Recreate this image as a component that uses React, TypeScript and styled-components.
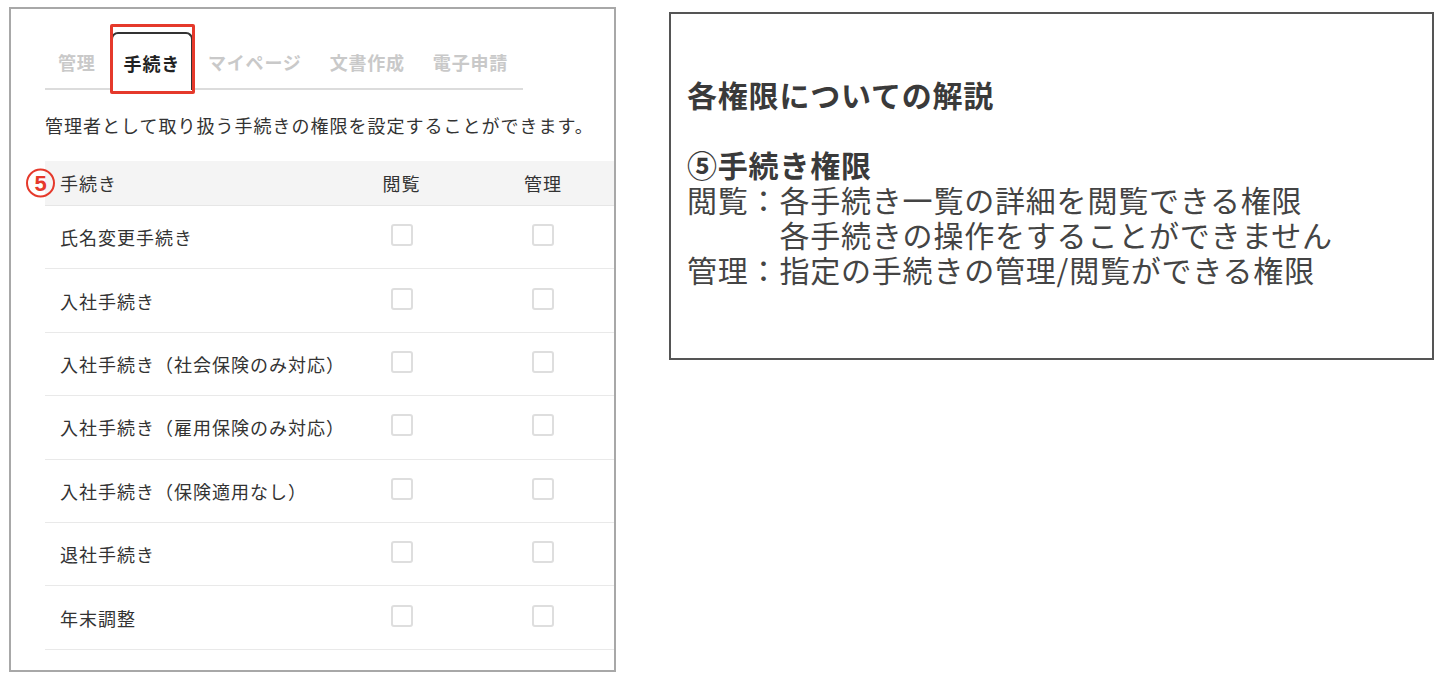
import styled, { createGlobalStyle } from "styled-components";
import { FC } from "react";

interface Procedure {
  id: number;
  name: string;
}

const tabs: Array<string> = ["管理", "手続き", "マイページ", "文書作成", "電子申請"];

const procedures: Array<Procedure> = [
  { id: 1, name: "氏名変更手続き" },
  { id: 2, name: "入社手続き" },
  { id: 3, name: "入社手続き（社会保険のみ対応）" },
  { id: 4, name: "入社手続き（雇用保険のみ対応）" },
  { id: 5, name: "入社手続き（保険適用なし）" },
  { id: 6, name: "退社手続き" },
  { id: 7, name: "年末調整" },
];

const GlobalStyle = createGlobalStyle`
  html, body {
    margin: 0;
    padding: 0;
    background: #fff;
  }

  body {
    font-family: "Noto Sans CJK JP", "Noto Sans", sans-serif;
    color: #333;
  }
`;

const App: FC = () => {
  return (
    <>
      <GlobalStyle />
      <Page>
        <SettingsPanel>
          <TabBar>
            {tabs.map((tab) => (
              <Tab key={tab} $isActive={tab === "手続き"}>
                {tab}
                {tab === "手続き" && <Highlight />}
              </Tab>
            ))}
          </TabBar>
          <Description>
            管理者として取り扱う手続きの権限を設定することができます。
          </Description>
          <Table>
            <HeaderRow>
              <Marker>5</Marker>
              <NameCell>手続き</NameCell>
              <CheckCell>閲覧</CheckCell>
              <CheckCell>管理</CheckCell>
            </HeaderRow>
            {procedures.map((item) => (
              <Row key={item.id}>
                <NameCell>{item.name}</NameCell>
                <CheckCell>
                  <CheckBox />
                </CheckCell>
                <CheckCell>
                  <CheckBox />
                </CheckCell>
              </Row>
            ))}
          </Table>
        </SettingsPanel>

        <NotePanel>
          <NoteTitle>各権限についての解説</NoteTitle>
          <NoteSubtitle>⑤手続き権限</NoteSubtitle>
          <NoteList>
            <NoteLabel>閲覧：</NoteLabel>
            <NoteText>
              各手続き一覧の詳細を閲覧できる権限
              <br />
              各手続きの操作をすることができません
            </NoteText>
            <NoteLabel>管理：</NoteLabel>
            <NoteText>指定の手続きの管理/閲覧ができる権限</NoteText>
          </NoteList>
        </NotePanel>
      </Page>
    </>
  );
};

export default App;

const Page = styled.div`
  display: flex;
  align-items: flex-start;
  padding: 7px 0 0 9px;
  width: 1452px;
  height: 682px;
  box-sizing: border-box;
`;

const SettingsPanel = styled.div`
  width: 607px;
  height: 665px;
  box-sizing: border-box;
  border: 2px solid #a8a8a8;
  padding: 23px 0 0 34px;
  overflow: hidden;
  font-size: 18px;
  letter-spacing: 1px;
`;

const TabBar = styled.div`
  display: flex;
  align-items: flex-end;
  gap: 2px;
  width: 478px;
  height: 56px;
  border-bottom: 2px solid #dcdcdc;
`;

const Tab = styled.div<{ $isActive?: boolean }>`
  position: relative;
  z-index: ${({ $isActive }) => ($isActive ? 1 : 0)};
  display: flex;
  align-items: center;
  box-sizing: border-box;
  height: ${({ $isActive }) => ($isActive ? "58px" : "56px")};
  margin-bottom: ${({ $isActive }) => ($isActive ? "-2px" : "0")};
  padding: ${({ $isActive }) => ($isActive ? "2px 11px 0" : "4px 13px 0")};
  background: ${({ $isActive }) => ($isActive ? "#fff" : "transparent")};
  border: ${({ $isActive }) => ($isActive ? "2px solid #333" : "none")};
  border-bottom: none;
  border-radius: 7px 7px 0 0;
  font-weight: 700;
  letter-spacing: 0.8px;
  color: ${({ $isActive }) => ($isActive ? "#222" : "#c9c9c9")};
  white-space: nowrap;
`;

const Highlight = styled.span`
  position: absolute;
  top: -10px;
  left: -3px;
  right: -4px;
  bottom: -4px;
  border: 3px solid #e5392b;
  border-radius: 2px;
  pointer-events: none;
`;

const Description = styled.p`
  margin: 22px 0 0;
  line-height: 26px;
  color: #333;
  white-space: nowrap;
`;

const Table = styled.div`
  margin-top: 23px;
  width: 569px;
`;

const HeaderRow = styled.div`
  position: relative;
  display: grid;
  grid-template-columns: 286px 141px 142px;
  align-items: center;
  height: 44px;
  background: #f4f4f4;
  border-bottom: 1px solid #e6e6e6;
`;

const Row = styled.div`
  display: grid;
  grid-template-columns: 286px 141px 142px;
  align-items: center;
  box-sizing: border-box;
  height: 63.4px;
  border-bottom: 1px solid #e9e9e9;
`;

const NameCell = styled.div`
  padding-left: 15px;
  color: #333;
  white-space: nowrap;
`;

const CheckCell = styled.div`
  display: flex;
  justify-content: center;
  color: #333;
`;

const CheckBox = styled.span`
  display: block;
  width: 22px;
  height: 22px;
  box-sizing: border-box;
  border: 2px solid #dedede;
  border-radius: 3px;
  margin-top: -4px;
`;

const Marker = styled.span`
  position: absolute;
  left: -19px;
  top: 50%;
  transform: translateY(-50%);
  display: flex;
  align-items: center;
  justify-content: center;
  width: 29px;
  height: 29px;
  box-sizing: border-box;
  border: 2.5px solid #e5392b;
  border-radius: 50%;
  font-family: "Liberation Sans", sans-serif;
  font-size: 22px;
  font-weight: 700;
  letter-spacing: 0;
  color: #e5392b;
`;

const NotePanel = styled.div`
  margin: 5px 0 0 53px;
  width: 765px;
  height: 348px;
  box-sizing: border-box;
  border: 2px solid #555;
  padding: 63px 16px 0;
  font-size: 30px;
  line-height: 35px;
  letter-spacing: 0.8px;
  color: #444;
`;

const NoteTitle = styled.div`
  margin-bottom: 35px;
  font-weight: 700;
  color: #3a3a3a;
`;

const NoteSubtitle = styled.div`
  font-weight: 700;
  color: #3a3a3a;
`;

const NoteList = styled.div`
  display: grid;
  grid-template-columns: auto 1fr;
`;

const NoteLabel = styled.span`
  white-space: nowrap;
`;

const NoteText = styled.span`
  white-space: nowrap;
`;
